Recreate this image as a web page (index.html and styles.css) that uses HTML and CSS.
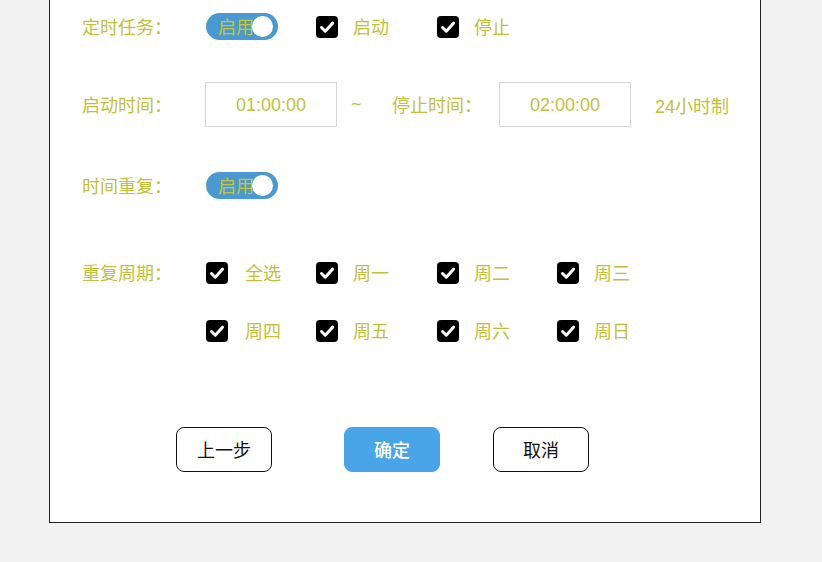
FILE: index.html
```html
<!DOCTYPE html>
<html lang="zh">
<head>
<meta charset="utf-8">
<title>定时任务</title>
<link rel="stylesheet" href="styles.css">
</head>
<body>
<div class="panel">
  <div class="row row1">
    <div class="label">定时任务：</div>
    <div class="slot"><div class="toggle"><span class="toggle-text">启用</span><span class="knob"></span></div></div>
    <div class="opt w121"><span class="cb"><svg viewBox="0 0 22 22" width="22" height="22"><rect width="22" height="22" rx="4" fill="#000"/><path d="M5.5 11.5 L9.3 15.2 L16.5 7.2" fill="none" stroke="#fff" stroke-width="3" stroke-linecap="round" stroke-linejoin="round"/></svg></span><span class="txt">启动</span></div>
    <div class="opt w120"><span class="cb"><svg viewBox="0 0 22 22" width="22" height="22"><rect width="22" height="22" rx="4" fill="#000"/><path d="M5.5 11.5 L9.3 15.2 L16.5 7.2" fill="none" stroke="#fff" stroke-width="3" stroke-linecap="round" stroke-linejoin="round"/></svg></span><span class="txt">停止</span></div>
  </div>

  <div class="row row2">
    <div class="label">启动时间：</div>
    <div class="timebox">01:00:00</div>
    <div class="tilde">~</div>
    <div class="label2">停止时间：</div>
    <div class="timebox">02:00:00</div>
    <div class="note">24小时制</div>
  </div>

  <div class="row row3">
    <div class="label">时间重复：</div>
    <div class="slot"><div class="toggle"><span class="toggle-text">启用</span><span class="knob"></span></div></div>
  </div>

  <div class="row row4">
    <div class="label">重复周期：</div>
    <div class="opt w110"><span class="cb"><svg viewBox="0 0 22 22" width="22" height="22"><rect width="22" height="22" rx="4" fill="#000"/><path d="M5.5 11.5 L9.3 15.2 L16.5 7.2" fill="none" stroke="#fff" stroke-width="3" stroke-linecap="round" stroke-linejoin="round"/></svg></span><span class="txt">全选</span></div>
    <div class="opt w121"><span class="cb"><svg viewBox="0 0 22 22" width="22" height="22"><rect width="22" height="22" rx="4" fill="#000"/><path d="M5.5 11.5 L9.3 15.2 L16.5 7.2" fill="none" stroke="#fff" stroke-width="3" stroke-linecap="round" stroke-linejoin="round"/></svg></span><span class="txt">周一</span></div>
    <div class="opt w120"><span class="cb"><svg viewBox="0 0 22 22" width="22" height="22"><rect width="22" height="22" rx="4" fill="#000"/><path d="M5.5 11.5 L9.3 15.2 L16.5 7.2" fill="none" stroke="#fff" stroke-width="3" stroke-linecap="round" stroke-linejoin="round"/></svg></span><span class="txt">周二</span></div>
    <div class="opt w120"><span class="cb"><svg viewBox="0 0 22 22" width="22" height="22"><rect width="22" height="22" rx="4" fill="#000"/><path d="M5.5 11.5 L9.3 15.2 L16.5 7.2" fill="none" stroke="#fff" stroke-width="3" stroke-linecap="round" stroke-linejoin="round"/></svg></span><span class="txt">周三</span></div>
  </div>

  <div class="row row5">
    <div class="label"></div>
    <div class="opt w110"><span class="cb"><svg viewBox="0 0 22 22" width="22" height="22"><rect width="22" height="22" rx="4" fill="#000"/><path d="M5.5 11.5 L9.3 15.2 L16.5 7.2" fill="none" stroke="#fff" stroke-width="3" stroke-linecap="round" stroke-linejoin="round"/></svg></span><span class="txt">周四</span></div>
    <div class="opt w121"><span class="cb"><svg viewBox="0 0 22 22" width="22" height="22"><rect width="22" height="22" rx="4" fill="#000"/><path d="M5.5 11.5 L9.3 15.2 L16.5 7.2" fill="none" stroke="#fff" stroke-width="3" stroke-linecap="round" stroke-linejoin="round"/></svg></span><span class="txt">周五</span></div>
    <div class="opt w120"><span class="cb"><svg viewBox="0 0 22 22" width="22" height="22"><rect width="22" height="22" rx="4" fill="#000"/><path d="M5.5 11.5 L9.3 15.2 L16.5 7.2" fill="none" stroke="#fff" stroke-width="3" stroke-linecap="round" stroke-linejoin="round"/></svg></span><span class="txt">周六</span></div>
    <div class="opt w120"><span class="cb"><svg viewBox="0 0 22 22" width="22" height="22"><rect width="22" height="22" rx="4" fill="#000"/><path d="M5.5 11.5 L9.3 15.2 L16.5 7.2" fill="none" stroke="#fff" stroke-width="3" stroke-linecap="round" stroke-linejoin="round"/></svg></span><span class="txt">周日</span></div>
  </div>

  <div class="buttons">
    <button class="btn btn-prev">上一步</button>
    <button class="btn btn-ok">确定</button>
    <button class="btn btn-cancel">取消</button>
  </div>
</div>
</body>
</html>
```

FILE: styles.css
```css
html, body {
  margin: 0;
  padding: 0;
  background: #f2f2f2;
}
body {
  font-family: "Liberation Sans", "Noto Sans CJK SC", sans-serif;
  font-size: 18px;
  color: #c2c03b;
}
.panel {
  box-sizing: border-box;
  width: 712px;
  height: 523px;
  margin-left: 49px;
  background: #fff;
  border: 1px solid #222;
  border-top: none;
  padding: 13px 0 0 32px;
}
.row {
  display: flex;
  align-items: center;
}
.label {
  width: 124px;
  flex: none;
  white-space: nowrap;
  font-family: "Noto Sans CJK SC", sans-serif;
  line-height: 1;
  padding-bottom: 2px;
}
.row1 { height: 27px; }
.row2 { height: 45px; margin-top: 42px; }
.row3 { height: 27px; margin-top: 45px; }
.row4 { height: 22px; margin-top: 63px; }
.row5 { height: 22px; margin-top: 36px; }

.slot { width: 110px; flex: none; }
.toggle {
  box-sizing: border-box;
  width: 72px;
  height: 27px;
  border-radius: 14px;
  background: #4a99d2;
  display: flex;
  align-items: center;
  padding-left: 12px;
}
.toggle-text {
  font-family: "Noto Sans CJK SC", sans-serif;
  font-size: 18px;
  line-height: 1;
  color: #c9c33a;
  width: 34px;
  white-space: nowrap;
  padding-bottom: 2px;
}
.knob {
  width: 21px;
  height: 21px;
  border-radius: 50%;
  background: #fff;
  flex: none;
}
.opt {
  display: flex;
  align-items: center;
  flex: none;
}
.w110 { width: 110px; }
.w121 { width: 121px; }
.w120 { width: 120px; }
.cb {
  width: 22px;
  height: 22px;
  display: block;
}
.cb svg { display: block; }
.txt {
  margin-left: 15px;
  font-family: "Noto Sans CJK SC", sans-serif;
  line-height: 1;
  padding-bottom: 2px;
}
.row4 .w110 .txt, .row5 .w110 .txt { margin-left: 17px; }

.timebox {
  box-sizing: border-box;
  width: 132px;
  height: 45px;
  margin-left: -1px;
  border: 1px solid #d7d7d7;
  display: flex;
  align-items: center;
  justify-content: center;
  font-size: 18px;
  flex: none;
  padding-top: 2px;
}
.tilde {
  margin-left: 14px;
  width: 12px;
}
.label2 {
  margin-left: 29px;
  width: 108px;
  flex: none;
  font-family: "Noto Sans CJK SC", sans-serif;
  line-height: 1;
  padding-bottom: 2px;
}
.note {
  margin-left: 24px;
  white-space: nowrap;
}

.buttons {
  display: flex;
  margin-top: 85px;
  padding-left: 94px;
}
.btn {
  box-sizing: border-box;
  width: 96px;
  height: 45px;
  border-radius: 8px;
  font-family: "Noto Sans CJK SC", sans-serif;
  font-size: 18px;
  background: #fff;
  border: 1px solid #111;
  color: #111;
  padding: 0 0 2px;
}
.btn-ok {
  margin-left: 72px;
  background: #4aa5e8;
  border-color: #4aa5e8;
  color: #fff;
  font-weight: 500;
}
.btn-cancel {
  margin-left: 53px;
}
```
